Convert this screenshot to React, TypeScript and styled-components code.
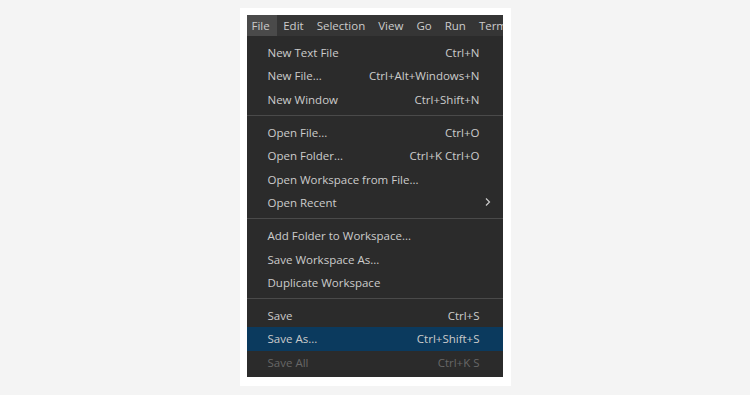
import React from "react"
import styled, { createGlobalStyle } from "styled-components"

const GlobalStyle = createGlobalStyle`
    html, body {
        margin: 0;
        padding: 0;
        background: #f4f4f4;
    }
    body {
        font-family: "Open Sans", "Noto Sans", sans-serif;
    }
`;

type MenuEntry =
    | { kind: 'item'; label: string; shortcut?: string; submenu?: boolean; active?: boolean; disabled?: boolean }
    | { kind: 'separator' };

const topMenus = ['File', 'Edit', 'Selection', 'View', 'Go', 'Run', 'Term'];

const entries: MenuEntry[] = [
    { kind: 'item', label: 'New Text File', shortcut: 'Ctrl+N' },
    { kind: 'item', label: 'New File...', shortcut: 'Ctrl+Alt+Windows+N' },
    { kind: 'item', label: 'New Window', shortcut: 'Ctrl+Shift+N' },
    { kind: 'separator' },
    { kind: 'item', label: 'Open File...', shortcut: 'Ctrl+O' },
    { kind: 'item', label: 'Open Folder...', shortcut: 'Ctrl+K Ctrl+O' },
    { kind: 'item', label: 'Open Workspace from File...' },
    { kind: 'item', label: 'Open Recent', submenu: true },
    { kind: 'separator' },
    { kind: 'item', label: 'Add Folder to Workspace...' },
    { kind: 'item', label: 'Save Workspace As...' },
    { kind: 'item', label: 'Duplicate Workspace' },
    { kind: 'separator' },
    { kind: 'item', label: 'Save', shortcut: 'Ctrl+S' },
    { kind: 'item', label: 'Save As...', shortcut: 'Ctrl+Shift+S', active: true },
    { kind: 'item', label: 'Save All', shortcut: 'Ctrl+K S', disabled: true },
];

const Chevron = () => (
    <svg width="8" height="10" viewBox="0 0 8 10">
        <path d="M2 1.5 L5.5 5 L2 8.5" fill="none" stroke="#cccccc" strokeWidth="1.2" />
    </svg>
);

export default function App() {
    return (
        <Page>
            <GlobalStyle />
            <Card>
                <Shot>
                    <MenuBar>
                        {topMenus.map((m, i) => (
                            <TopItem key={m} open={i === 0}>{m}</TopItem>
                        ))}
                    </MenuBar>
                    <Dropdown>
                        {entries.map((e, i) =>
                            e.kind === 'separator'
                                ? <Separator key={i} />
                                : (
                                    <Row key={i} active={e.active} disabled={e.disabled}>
                                        <Label>{e.label}</Label>
                                        {e.shortcut && <Shortcut>{e.shortcut}</Shortcut>}
                                        {e.submenu && <Arrow><Chevron /></Arrow>}
                                    </Row>
                                )
                        )}
                    </Dropdown>
                </Shot>
            </Card>
        </Page>
    )
}

const Page = styled.div`
    width: 750px;
    height: 395px;
    display: flex;
    justify-content: center;
    align-items: flex-start;
    padding-top: 8px;
    box-sizing: border-box;
`;

const Card = styled.div`
    background: #ffffff;
    padding: 7px 8px 9px 7px;
`;

const Shot = styled.div`
    width: 256px;
    height: 362px;
    background: #2b2b2b;
    overflow: hidden;
    display: flex;
    flex-direction: column;
`;

const MenuBar = styled.div`
    height: 21px;
    background: #353535;
    display: flex;
    align-items: stretch;
    white-space: nowrap;
    overflow: hidden;
`;

const TopItem = styled.div<{ open?: boolean }>`
    padding: 0 6.5px;
    display: flex;
    align-items: center;
    flex-shrink: 0;
    font-size: 11.5px;
    color: #cccccc;
    background: ${p => p.open ? '#4a4a4a' : 'transparent'};

    &:first-child {
        padding: 0 7px 0 5px;
    }
`;

const Dropdown = styled.div`
    padding-top: 5px;
    display: flex;
    flex-direction: column;
`;

const Row = styled.div<{ active?: boolean; disabled?: boolean }>`
    height: 23.3px;
    flex-shrink: 0;
    display: flex;
    align-items: center;
    padding: 0 23px 0 21px;
    font-size: 11.5px;
    color: ${p => p.disabled ? '#676767' : '#cccccc'};
    background: ${p => p.active ? '#0b3a5e' : 'transparent'};
    white-space: nowrap;
`;

const Label = styled.span`
    flex: 1;
`;

const Shortcut = styled.span`
    margin-left: 16px;
`;

const Arrow = styled.span`
    display: flex;
    align-items: center;
    margin-right: -12px;
`;

const Separator = styled.div`
    height: 1px;
    flex-shrink: 0;
    background: #4a4a4a;
    margin: 4px 0 5px;
`;
